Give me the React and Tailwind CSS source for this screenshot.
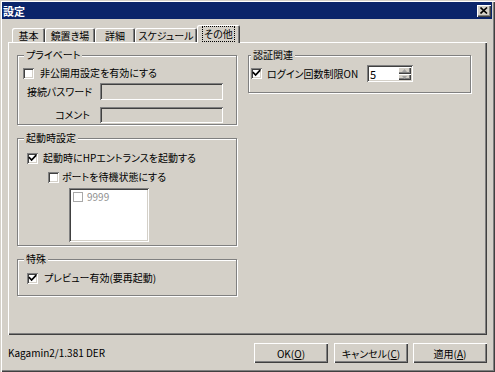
import React from "react";

const sunken =
  "shadow-[inset_1px_1px_#808080,inset_-1px_-1px_#ffffff,inset_2px_2px_#404040,inset_-2px_-2px_#d4d0c8]";
const raised =
  "shadow-[inset_1px_1px_#ffffff,inset_-1px_-1px_#404040,inset_-2px_-2px_#808080]";

function Check({ checked, disabled }) {
  return (
    <span
      className={
        "relative block w-[11px] h-[11px] shrink-0 bg-white " +
        (disabled ? "border border-[#a8a8a8]" : sunken)
      }
    >
      {checked && (
        <svg
          className="absolute left-0 top-0"
          width="11"
          height="11"
          viewBox="0 0 11 11"
        >
          <path
            d="M2.5 4.8 L4.6 7 L8.6 2.8"
            stroke="#000"
            strokeWidth="1.7"
            fill="none"
            strokeLinecap="square"
          />
        </svg>
      )}
    </span>
  );
}

function Group({ title, className, titleLeft, children }) {
  return (
    <div
      className={
        "relative border border-[#808080] shadow-[inset_1px_1px_#ffffff,1px_1px_#ffffff] " +
        className
      }
    >
      <span
        className={
          "absolute top-[-8px] bg-[#d4d0c8] px-[2px] leading-[14px] " + titleLeft
        }
      >
        {title}
      </span>
      {children}
    </div>
  );
}

function Tab({ label, w, selected }) {
  if (selected) {
    return (
      <div
        className={`relative z-10 h-[18px] -mb-[1px] bg-[#d4d0c8] flex items-start justify-center pt-[1px] rounded-tl-[2px] rounded-tr-[2px] shadow-[inset_1px_1px_#ffffff,inset_-1px_0_#404040,inset_-2px_0_#808080] ${w}`}
      >
        <span className="border border-dotted border-black px-[1px] leading-[14px] mt-[0px]">
          {label}
        </span>
      </div>
    );
  }
  return (
    <div
      className={`h-[14px] flex items-center justify-center leading-[14px] pt-[2px] rounded-tl-[2px] rounded-tr-[2px] shadow-[inset_1px_1px_#ffffff,inset_-1px_0_#404040,inset_-2px_0_#808080] ${w}`}
    >
      {label}
    </div>
  );
}

function Btn({ children, w }) {
  return (
    <div
      className={`h-[20px] flex items-center justify-center bg-[#d4d0c8] ${raised} ${w}`}
    >
      {children}
    </div>
  );
}

export default function App() {
  return (
    <div className="w-[495px] h-[372px] bg-[#d4d0c8] text-black text-[10px] font-['Noto_Sans_CJK_JP','Noto_Sans',sans-serif] [font-feature-settings:'palt'] flex flex-col pt-[2px] pl-[2px] pr-[3px] shadow-[inset_1px_1px_#d4d0c8,inset_2px_2px_#ffffff,inset_-1px_-1px_#404040,inset_-2px_-2px_#808080]">
      {/* title bar */}
      <div className="h-[17px] bg-[#0a246a] flex items-center pl-[1px] pr-[1px] shrink-0">
        <span className="text-white font-bold text-[11px] leading-[14px]">
          設定
        </span>
        <div
          className={`ml-auto w-[14px] h-[12px] bg-[#d4d0c8] flex items-center justify-center ${raised}`}
        >
          <svg width="8" height="7" viewBox="0 0 8 7">
            <path d="M0.5 0.5 L7 6.5 M7 0.5 L0.5 6.5" stroke="#000" strokeWidth="1.6" />
          </svg>
        </div>
      </div>

      {/* tab row */}
      <div className="h-[23px] flex items-end pl-[10px] shrink-0">
        <Tab label="基本" w="w-[33px]" />
        <Tab label="鏡置き場" w="w-[50px]" />
        <Tab label="詳細" w="w-[40px]" />
        <Tab label="スケジュール" w="w-[62px]" />
        <Tab label="その他" w="w-[43px]" selected />
      </div>

      {/* panel */}
      <div className="ml-[6px] w-[479px] h-[293px] shrink-0 flex gap-[11px] pl-[9px] pt-[13px] shadow-[inset_1px_1px_#ffffff,inset_-1px_-1px_#404040,inset_-2px_-2px_#808080]">
        {/* left column */}
        <div className="w-[220px] flex flex-col gap-[13px]">
          <Group title="プライベート" className="h-[70px] pt-[11px]" titleLeft="left-[6px]">
            <div className="flex items-center ml-[5px] h-[12px] gap-[6px]">
              <Check />
              <span className="leading-[12px]">非公開用設定を有効にする</span>
            </div>
            <div className="flex items-center mt-[4px] h-[17px]">
              <span className="w-[74px] text-right leading-[12px]">接続パスワード</span>
              <div className={`ml-[8px] w-[123px] h-[17px] ${sunken}`} />
            </div>
            <div className="flex items-center mt-[7px] h-[16px]">
              <span className="w-[72px] text-right leading-[12px]">コメント</span>
              <div className={`ml-[10px] w-[123px] h-[16px] ${sunken}`} />
            </div>
          </Group>

          <Group title="起動時設定" className="h-[108px] pt-[13px]" titleLeft="left-[6px]">
            <div className="flex items-center ml-[9px] h-[12px] gap-[5px]">
              <Check checked />
              <span className="leading-[12px]">起動時にHPエントランスを起動する</span>
            </div>
            <div className="flex items-center ml-[30px] mt-[7px] h-[12px] gap-[3px]">
              <Check />
              <span className="leading-[12px]">ポートを待機状態にする</span>
            </div>
            <div className={`ml-[51px] mt-[5px] w-[80px] h-[54px] bg-white ${sunken} pt-[4px] pl-[4px]`}>
              <div className="flex items-center gap-[4px] h-[10px]">
                <span className="block w-[10px] h-[10px] bg-white border border-[#a8a8a8]" />
                <span className="text-[#909090] leading-[10px]">9999</span>
              </div>
            </div>
          </Group>

          <Group title="特殊" className="h-[37px] pt-[12px]" titleLeft="left-[6px]">
            <div className="flex items-center ml-[9px] h-[12px] gap-[6px]">
              <Check checked />
              <span className="leading-[12px]">プレビュー有効(要再起動)</span>
            </div>
          </Group>
        </div>

        {/* right column */}
        <div className="w-[223px] flex flex-col">
          <Group title="認証関連" className="h-[38px] pt-[9px]" titleLeft="left-[2px]">
            <div className="flex items-center h-[17px] ml-[2px]">
              <Check checked />
              <span className="ml-[5px] w-[100px] leading-[12px]">ログイン回数制限ON</span>
              <div className={`w-[46px] h-[17px] bg-white ${sunken} flex items-center pl-[3px] pr-[2px]`}>
                <span className="text-[11px] leading-[12px]">5</span>
                <div className="ml-auto flex flex-col h-[13px]">
                  <div className={`w-[13px] h-[7px] bg-[#d4d0c8] ${raised} flex items-center justify-center`}>
                    <svg width="5" height="3" viewBox="0 0 5 3"><path d="M0 3 L2.5 0 L5 3 Z" fill="#a0a0a0" /></svg>
                  </div>
                  <div className={`w-[13px] h-[6px] bg-[#d4d0c8] ${raised} flex items-center justify-center`}>
                    <svg width="5" height="3" viewBox="0 0 5 3"><path d="M0 0 L2.5 3 L5 0 Z" fill="#a0a0a0" /></svg>
                  </div>
                </div>
              </div>
            </div>
          </Group>
        </div>
      </div>

      {/* bottom row */}
      <div className="ml-[6px] mt-[8px] h-[20px] w-[479px] flex items-center shrink-0">
        <span className="leading-[12px]">Kagamin2/1.381 DER</span>
        <div className="ml-auto flex">
          <Btn w="w-[74px]">
            OK(<span className="underline">O</span>)
          </Btn>
          <div className="w-[6px]" />
          <Btn w="w-[74px]">
            キャンセル(<span className="underline">C</span>)
          </Btn>
          <div className="w-[5px]" />
          <Btn w="w-[74px]">
            適用(<span className="underline">A</span>)
          </Btn>
        </div>
      </div>
    </div>
  );
}
